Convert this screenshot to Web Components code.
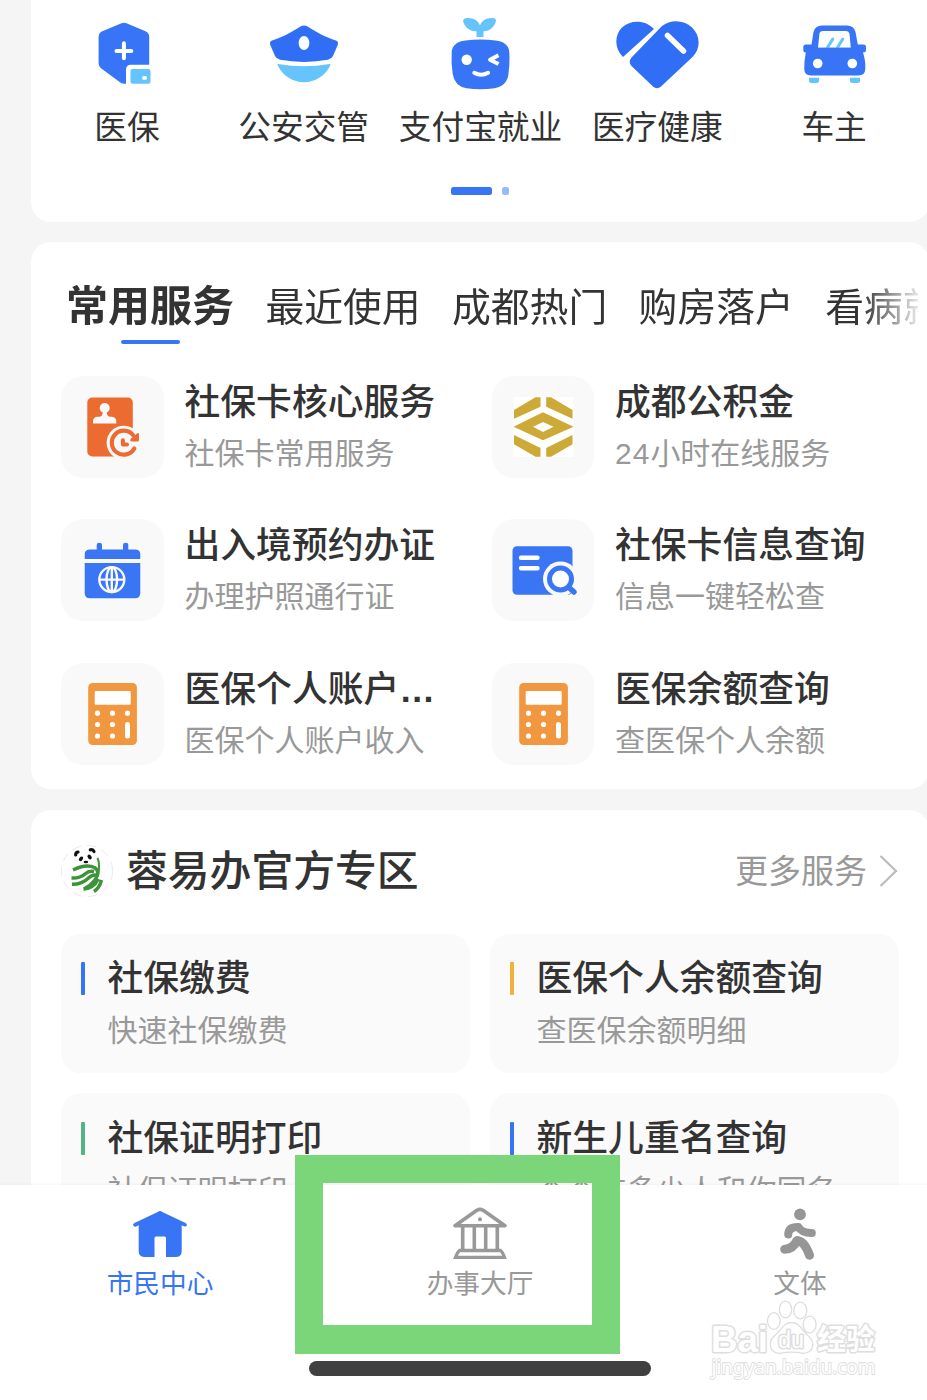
<!DOCTYPE html>
<html lang="zh-CN">
<head>
<meta charset="UTF-8">
<title>市民中心</title>
<style>
    body {
        margin: 0;
        background: #f5f5f5;
        color: #333;
        font-family: 'Liberation Sans', 'Noto Sans CJK SC', sans-serif;
        overflow: hidden;
    }
</style>
</head>
<body>
<citizen-app>
    <app-grid>
        <app-entry icon="shield">医保</app-entry>
        <app-entry icon="police">公安交管</app-entry>
        <app-entry icon="sprout">支付宝就业</app-entry>
        <app-entry icon="heart">医疗健康</app-entry>
        <app-entry icon="car">车主</app-entry>
    </app-grid>
    <service-panel>
        <span slot="tab">常用服务</span>
        <span slot="tab">最近使用</span>
        <span slot="tab">成都热门</span>
        <span slot="tab">购房落户</span>
        <span slot="tab">看病就医</span>
        <service-item icon="idcard">社保卡核心服务<span slot="sub">社保卡常用服务</span></service-item>
        <service-item icon="fund">成都公积金<span slot="sub"><span style="letter-spacing:1px">24</span>小时在线服务</span></service-item>
        <service-item icon="calendar">出入境预约办证<span slot="sub">办理护照通行证</span></service-item>
        <service-item icon="search">社保卡信息查询<span slot="sub">信息一键轻松查</span></service-item>
        <service-item icon="calc">医保个人账户<b>…</b><span slot="sub">医保个人账户收入</span></service-item>
        <service-item icon="calc">医保余额查询<span slot="sub">查医保个人余额</span></service-item>
    </service-panel>
    <zone-panel>
        <span slot="title">蓉易办官方专区</span>
        <span slot="more">更多服务</span>
        <zone-card color="#3875f6">社保缴费<span slot="sub">快速社保缴费</span></zone-card>
        <zone-card color="#efb23e">医保个人余额查询<span slot="sub">查医保余额明细</span></zone-card>
        <zone-card color="#54b483">社保证明打印<span slot="sub">社保证明打印</span></zone-card>
        <zone-card color="#3875f6">新生儿重名查询<span slot="sub">查查有多少人和你同名</span></zone-card>
    </zone-panel>
    <tab-bar slot="bar">
        <tab-item icon="home" active>市民中心</tab-item>
        <tab-item icon="hall">办事大厅</tab-item>
        <tab-item icon="runner">文体</tab-item>
    </tab-bar>
    <focus-frame slot="overlay"></focus-frame>
    <site-mark slot="overlay"></site-mark>
</citizen-app>

<script>
const icons = {
    shield: ['83 10 88 84', `
        <path fill="#3875f6" d="M121.5 23.3Q124 22.2 126.5 23.3L145.5 31.2Q149.2 33 149.2 37V64.7H131Q126 64.7 126 69.7V83.7H124Q121.8 83.7 120 82.3L102 69Q98.6 66.7 98.6 62.7V37Q98.6 33 102.3 31.2Z"/>
        <path stroke="#fff" stroke-width="4" stroke-linecap="round" d="M116.5 51H131.3M123.9 43.3V58.3"/>
        <rect x="130.5" y="69" width="20" height="14.8" rx="2" fill="#64c4fb"/>
        <rect x="142.2" y="76" width="4.7" height="3.7" rx="1.5" fill="#fff"/>`],
    police: ['260 10 88 84', `
        <path fill="#2f6ef5" d="M300.500 26.500Q304 24.500 307.500 26.500C316 32 326 37.500 336 40.500Q339 42 337.700 45L333 56Q331.500 59 328 59.800Q304 64 280 59.800Q276.500 59 275 56L270.300 45Q269 42 272 40.500C282 37.500 292 32 300.500 26.500Z"/>
        <ellipse cx="304" cy="43" rx="5.400" ry="7" fill="#fff"/>
        <path fill="#64c4fb" d="M278 64Q304 68.500 329.800 64Q331 64 330 66C325 76 315 82.200 304 82.200S283 76 278 66Q277 64 278 64Z"/>`],
    sprout: ['436.5 10 88 84', `
        <path fill="#64c4fb" d="M463.500 21Q464 18 468 18C475 18 479 21 480.500 25.500C482 21 486 18 493 18Q496.500 18 496.500 21C495 27 490 31.500 484 31.200V37H477V31.200C470 31.500 465 27 463.500 21Z"/>
        <path fill="#3875f6" d="M466 40.500Q481 38.500 496 40.500Q509 42 509.800 52Q510.500 62 509 74Q507.500 86 495 88.300Q481 90 467 88.300Q455 86 453.200 74Q451.500 62 452.200 52Q453 42 466 40.500Z"/>
        <circle cx="467.2" cy="59.700" r="5.2" fill="#fff"/>
        <path fill="none" stroke="#fff" stroke-width="4" stroke-linejoin="round" d="M499 55.300L490.500 59.700L499 64"/>
        <path fill="none" stroke="#fff" stroke-width="4" stroke-linecap="round" d="M474.800 72.800Q481.500 76.800 488.600 72.800"/>`],
    heart: ['613 10 88 84', `
        <path fill="#2f6ef5" d="M623 57C614 48 614.500 35 622 27.500C631 19 646 20 654 29Z"/>
        <path fill="#2f6ef5" d="M662 26C671 19 684 20 692 27.500C701 36 700.500 49 692.500 57L661 86.500Q657 90 653 86.500L631.500 66Q628 62 631.500 57.500Z"/>
        <path stroke="#fff" stroke-width="5.500" stroke-linecap="round" d="M667.500 35.500L683.500 51"/>`],
    car: ['790 10 88 84', `
        <path fill="#3875f6" d="M822 25.500H847Q854 25.500 855.500 32L857.800 44.500H863.500Q866 44.500 866 47V50Q866 52.500 863 52.500C865 58 865.500 64 865.300 69Q865 75.500 858.500 75.500H811Q804.400 75.500 804.200 69Q804 62 805.800 52.500Q803.300 52.500 803.300 50V47Q803.300 44.500 806 44.500H811.500L813.500 32Q815 25.500 822 25.500Z"/>
        <path fill="#fff" d="M823 31H845.500Q849 31 849.500 34L850.800 47.700H818L819.400 34Q819.800 31 823 31Z"/>
        <path stroke="#64c4fb" stroke-width="3" stroke-linecap="round" d="M827.500 47.500L832.800 39M837.500 47.500L842.800 39"/>
        <path fill="#3875f6" d="M815 47.700H854V52H815Z"/>
        <circle cx="817.700" cy="63.500" r="4.800" fill="#fff"/><circle cx="852.300" cy="63.500" r="4.800" fill="#fff"/>
        <path fill="#64c4fb" d="M809 77.800H819V80.500Q819 83 816.500 83H811.500Q809 83 809 80.500ZM850 77.800H860V80.500Q860 83 857.500 83H852.500Q850 83 850 80.500Z"/>`],
    idcard: ['61 376 103 102', `
        <rect x="87.300" y="397.500" width="45.500" height="59" rx="5" fill="#eb6b30"/>
        <circle cx="104.700" cy="408" r="5" fill="#f9f9f9"/>
        <path fill="#f9f9f9" d="M102.800 411H106.600Q106.500 416.500 110 416.700H112Q116.300 417.500 116.300 421V423.500H93V421Q93 417.500 97 416.700H99.500Q103 416.500 102.800 411Z"/>
        <circle cx="123.600" cy="442.700" r="17" fill="#f9f9f9"/>
        <path fill="none" stroke="#eb6b30" stroke-width="4.200" stroke-linecap="round" d="M133 435A12 12 0 1 0 134.300 448.500"/>
        <path fill="#eb6b30" d="M139 434V440Q139 441.500 137.500 441.500H132Q129 441 131 438.500L137 433.500Q139 432.500 139 434Z"/>
        <path fill="none" stroke="#eb6b30" stroke-width="4" stroke-linecap="round" stroke-linejoin="round" d="M122.900 440.300V444.500H127"/>`],
    fund: ['491.5 376 102 102', `
        <path fill="#fffffd" d="M513 397H573V457H513Z"/>
        <path fill="#cda938" d="M513.500 410L535 397.300H540V406.700L513.500 418.700ZM572 410L550.500 397.300H545.700V406.700L572 418.700ZM513.500 435L540 448V456.800H535L513.500 444.300ZM572 435L545.700 448V456.800H550.500L572 444.300Z"/>
        <path fill="#cda938" fill-rule="evenodd" d="M542.500 412.300L573 426.800L542.500 440.300L513 426.800ZM542.500 422L532.500 426.800L542.500 432L553 426.800Z"/>`],
    calendar: ['61 519 103 102', `
        <path fill="#3a76f4" d="M84.700 559V554.500Q84.700 549.500 90 549.500H96.700V545Q96.700 542.700 99.200 542.700Q102 542.700 102 545V549.500H123V545Q123 542.700 125.500 542.700Q128.300 542.700 128.300 545V549.500H135Q140.300 549.500 140.300 554.500V559ZM84.700 563H140.300V593Q140.300 598.300 135 598.300H90Q84.700 598.300 84.700 593Z"/>
        <g fill="none" stroke="#f9f9f9" stroke-width="2.400"><circle cx="111.800" cy="579.600" r="12.500"/><ellipse cx="111.800" cy="579.600" rx="5.300" ry="12.500"/><path d="M99.500 579.600H124M111.800 567V592"/></g>`],
    search: ['491.5 519 102 102', `
        <rect x="512" y="546.200" width="60" height="48.500" rx="4.500" fill="#3a76f4"/>
        <path stroke="#fff" stroke-width="4.400" stroke-linecap="round" d="M520.500 557.700H537M520.500 568.300H537"/>
        <circle cx="560" cy="579" r="17.500" fill="#f9f9f9"/>
        <circle cx="560" cy="579" r="11" fill="#fff" stroke="#3a76f4" stroke-width="5"/>
        <path stroke="#3a76f4" stroke-width="5.500" stroke-linecap="round" d="M568.500 587.500L573.500 592"/>`],
    calc: ['61 663 103 102', `
        <rect x="88.200" y="683" width="48.700" height="62" rx="4.500" fill="#f0973f"/>
        <rect x="94.700" y="691" width="36" height="13.700" rx="1" fill="#fff"/>
        <g fill="#fff"><circle cx="97.500" cy="713.200" r="2.600"/><circle cx="112.500" cy="713.200" r="2.600"/><circle cx="127.500" cy="713.200" r="2.600"/><circle cx="97.500" cy="724.500" r="2.600"/><circle cx="112.500" cy="724.500" r="2.600"/><circle cx="97.500" cy="736" r="2.600"/><circle cx="112.500" cy="736" r="2.600"/><rect x="125" y="722" width="5" height="16.500" rx="2.500"/></g>`],
    panda: ['61 845 52 52', `
        <circle cx="87" cy="871" r="25.600" fill="#fff" stroke="#e0e0e0" stroke-width=".7" stroke-dasharray="9 6"/>
        <path fill="none" stroke="#111" stroke-width="3.200" stroke-linecap="round" d="M75.700 855Q75.500 852.500 78 852M90.300 849.800Q93 849 94 851.500"/>
        <g fill="#111"><ellipse cx="81" cy="858.800" rx="1.800" ry="2.600" transform="rotate(40 81 858.800)"/><ellipse cx="89.600" cy="857" rx="1.800" ry="2.600" transform="rotate(-40 89.600 857)"/><ellipse cx="85.900" cy="862" rx="2.300" ry="1.300"/></g>
        <g fill="none" stroke="#3d9339" stroke-width="3.400"><path d="M73 870Q86 863.500 94.500 867.500Q101.500 872 94 881Q90 886 84 889"/><path d="M71.500 878Q80 878.500 85 874Q89 870.500 94 871.500"/><path d="M72 884.300Q82 884.500 88.500 878Q92 874.500 96 875"/><path stroke-width="2" d="M97.500 858Q100.500 865 98 874"/><path d="M83.500 889Q93 889 98.500 879M94 891.500Q99.500 888 101.500 880"/></g>`],
    arrow: ['876 852 22 38', `<path fill="none" stroke="#bbb" stroke-width="2.200" d="M879.500 856L895 871L879.500 886"/>`],
    home: ['116 1205 88 56', `
        <path fill="#3875f6" d="M157.700 1212Q160 1210.200 162.300 1212L185.500 1223Q187.300 1224 186.800 1225.300Q186.200 1227.200 184 1226.200L181.700 1225.200V1251Q181.700 1257 175.500 1257H166V1238Q166 1236.500 164.500 1236.500H156Q154.500 1236.500 154.500 1238V1257H145Q138.700 1257 138.700 1251V1225.200L136 1226.400Q134 1227.200 133.200 1225.300Q132.700 1224 134.500 1223Z"/>`],
    hall: ['436 1205 88 56', `
        <g fill="none" stroke="#999" stroke-width="3.600" stroke-linejoin="round"><path d="M476.500 1210.500Q480 1208.300 483.500 1210.500L505 1225.700H455ZM462.700 1226V1250M474.300 1226V1250M485.700 1226V1250M497.300 1226V1250"/><path stroke-width="3.300" stroke-linejoin="miter" d="M459.500 1250.500H500.500Q502.500 1252 504.500 1257.300H455.500Q457.500 1252 459.500 1250.500Z"/></g>
        <circle cx="480" cy="1219.300" r="2" fill="#999"/>`],
    runner: ['756 1205 88 56', `
        <circle cx="800" cy="1214.300" r="5.900" fill="#969696"/>
        <g fill="none" stroke="#969696" stroke-linecap="round" stroke-linejoin="round"><path stroke-width="8" d="M788.200 1234.500Q788.500 1226.700 798.500 1227Q801.500 1233 811.800 1233"/><path stroke-width="9" d="M784.700 1249.300Q793 1249 797 1240.500Q804.500 1241 809.500 1255.300"/></g>`]
};

class UiIcon extends HTMLElement {
    constructor() {
        super();
        this.attachShadow({ mode: 'open' });
    }

    connectedCallback() {
        const [box, body] = icons[this.getAttribute('name')];
        const [, , w, h] = box.split(' ');
        this.shadowRoot.innerHTML = `
            <style>
                :host { display: block; flex-shrink: 0; }
                svg { display: block; }
            </style>
            <svg viewBox="${box}" width="${w}" height="${h}">${body}</svg>
        `;
    }
}

class CitizenApp extends HTMLElement {
    constructor() {
        super();
        this.attachShadow({ mode: 'open' }).innerHTML = `
            <style>
                :host {
                    display: block;
                    position: relative;
                    height: 1400px;
                    overflow: hidden;
                }
                main {
                    display: flex;
                    flex-direction: column;
                    width: 898px;
                    padding-left: 31px;
                }
            </style>
            <main><slot></slot></main>
            <slot name="bar"></slot>
            <slot name="overlay"></slot>
        `;
    }
}

class AppGrid extends HTMLElement {
    constructor() {
        super();
        this.attachShadow({ mode: 'open' }).innerHTML = `
            <style>
                :host {
                    display: block;
                    box-sizing: border-box;
                    height: 222px;
                    margin-bottom: 20px;
                    padding: 10px 0 0 7.5px;
                    background: #fff;
                    border-radius: 0 0 20px 20px;
                }
                .row { display: grid; grid-template-columns: repeat(5, 176.8px); height: 177px; }
                .dots { display: flex; gap: 9.5px; padding-left: 412.5px; }
                i { width: 7.5px; height: 8px; border-radius: 2.5px; background: #98bafa; }
                i.on { width: 41px; background: #3875f6; }
            </style>
            <div class="row"><slot></slot></div>
            <div class="dots"><i class="on"></i><i></i></div>
        `;
    }
}

class AppEntry extends HTMLElement {
    constructor() {
        super();
        this.attachShadow({ mode: 'open' });
    }

    connectedCallback() {
        this.shadowRoot.innerHTML = `
            <style>
                :host { display: flex; flex-direction: column; align-items: center; }
                .label { margin-top: 10px; font-size: 32.7px; line-height: 48px; white-space: nowrap; }
            </style>
            <ui-icon name="${this.getAttribute('icon')}"></ui-icon>
            <div class="label"><slot></slot></div>
        `;
    }
}

class ServicePanel extends HTMLElement {
    constructor() {
        super();
        this.attachShadow({ mode: 'open' }).innerHTML = `
            <style>
                :host {
                    display: block;
                    box-sizing: border-box;
                    height: 547px;
                    margin-bottom: 21px;
                    padding: 34px 0 0 30px;
                    background: #fff;
                    border-radius: 20px;
                }
                nav {
                    display: flex;
                    gap: 31.4px;
                    width: 852px;
                    height: 64px;
                    padding-left: 5px;
                    overflow: hidden;
                    -webkit-mask-image: linear-gradient(to right, #000 800px, rgba(0,0,0,.12) 857px);
                    mask-image: linear-gradient(to right, #000 800px, rgba(0,0,0,.12) 857px);
                }
                ::slotted([slot=tab]) {
                    flex-shrink: 0;
                    font-size: 38.8px;
                    line-height: 63px;
                    white-space: nowrap;
                }
                ::slotted([slot=tab]:first-of-type) { font-size: 42px; line-height: 61px; font-weight: 700; }
                .line { width: 59px; height: 4px; margin: 0 0 32px 59.5px; border-radius: 2px; background: #3875f6; }
                .grid { display: grid; grid-template-columns: 430.5px 430px; grid-template-rows: 143px 144px 102px; }
            </style>
            <nav><slot name="tab"></slot></nav>
            <div class="line"></div>
            <div class="grid"><slot></slot></div>
        `;
    }
}

class ServiceItem extends HTMLElement {
    constructor() {
        super();
        this.attachShadow({ mode: 'open' });
    }

    connectedCallback() {
        this.shadowRoot.innerHTML = `
            <style>
                :host { display: flex; gap: 21px; }
                ui-icon { width: 102.5px; height: 102px; border-radius: 22px; background: #f9f9f9; overflow: hidden; }
                .title { padding-top: 1px; font-size: 35.8px; line-height: 52px; font-weight: 500; white-space: nowrap; }
                .sub { margin-top: -1px; font-size: 30px; line-height: 52px; color: #999; white-space: nowrap; }
            </style>
            <ui-icon name="${this.getAttribute('icon')}"></ui-icon>
            <div>
                <div class="title"><slot></slot></div>
                <div class="sub"><slot name="sub"></slot></div>
            </div>
        `;
    }
}

class ZonePanel extends HTMLElement {
    constructor() {
        super();
        this.attachShadow({ mode: 'open' }).innerHTML = `
            <style>
                :host {
                    display: block;
                    padding: 35px 30px 0;
                    background: #fff;
                    border-radius: 20px 20px 0 0;
                }
                header { display: flex; align-items: center; height: 52px; margin-bottom: 37px; }
                .title { flex: 1; margin-left: 13px; padding-top: 2px; font-size: 41.8px; line-height: 52px; font-weight: 500; }
                .more { margin-right: 10px; padding-top: 2px; font-size: 33px; line-height: 52px; color: #999; }
                .grid { display: grid; grid-template-columns: 409px 409px; grid-auto-rows: 139px; gap: 20px; }
                /* the second row of cards sits a little lower inside its box */
                ::slotted(zone-card:nth-of-type(n+3)) { --pad: 20px; }
            </style>
            <header>
                <ui-icon name="panda"></ui-icon>
                <div class="title"><slot name="title"></slot></div>
                <div class="more"><slot name="more"></slot></div>
                <ui-icon name="arrow"></ui-icon>
            </header>
            <div class="grid"><slot></slot></div>
        `;
    }
}

class ZoneCard extends HTMLElement {
    constructor() {
        super();
        this.attachShadow({ mode: 'open' });
    }

    connectedCallback() {
        this.shadowRoot.innerHTML = `
            <style>
                :host { display: flex; box-sizing: border-box; gap: 23px; padding: var(--pad, 19px) 0 0 19.5px; border-radius: 20px; background: #fafafa; }
                i { width: 4px; height: 33.5px; margin-top: 8.5px; border-radius: 1px; background: ${this.getAttribute('color')}; }
                .title { font-size: 35.8px; line-height: 52px; font-weight: 500; white-space: nowrap; }
                .sub { font-size: 30px; line-height: 51px; color: #999; white-space: nowrap; }
            </style>
            <i></i>
            <div>
                <div class="title"><slot></slot></div>
                <div class="sub"><slot name="sub"></slot></div>
            </div>
        `;
    }
}

class TabBar extends HTMLElement {
    constructor() {
        super();
        this.attachShadow({ mode: 'open' }).innerHTML = `
            <style>
                :host {
                    position: absolute;
                    left: 0;
                    bottom: 0;
                    width: 960px;
                    height: 215px;
                    background: #fff;
                    box-shadow: 0 -1px 3px rgba(0,0,0,.04);
                }
                .tabs { display: grid; grid-template-columns: repeat(3, 320px); height: 176px; }
                .pill { width: 342px; height: 15px; margin: 0 auto; border-radius: 8px; background: #404040; }
            </style>
            <div class="tabs"><slot></slot></div>
            <div class="pill"></div>
        `;
    }
}

class TabItem extends HTMLElement {
    constructor() {
        super();
        this.attachShadow({ mode: 'open' });
    }

    connectedCallback() {
        this.shadowRoot.innerHTML = `
            <style>
                :host { display: flex; flex-direction: column; align-items: center; padding-top: 20px; color: #999; }
                :host([active]) { color: #3875f6; }
                .label { margin-top: 3px; font-size: 26.7px; line-height: 40px; }
            </style>
            <ui-icon name="${this.getAttribute('icon')}"></ui-icon>
            <div class="label"><slot></slot></div>
        `;
    }
}

class FocusFrame extends HTMLElement {
    constructor() {
        super();
        this.attachShadow({ mode: 'open' }).innerHTML = `
            <style>
                :host {
                    position: absolute;
                    left: 295px;
                    top: 1155px;
                    width: 269px;
                    height: 142px;
                    border: 28px solid #7bd67a;
                    border-bottom-width: 29px;
                }
            </style>
        `;
    }
}

class SiteMark extends HTMLElement {
    constructor() {
        super();
        this.attachShadow({ mode: 'open' }).innerHTML = `
            <style>
                :host { position: absolute; left: 700px; top: 1295px; }
                svg { display: block; }
                text { paint-order: stroke; stroke-linejoin: round; }
            </style>
            <svg width="190" height="95" viewBox="700 1295 190 95" fill="#fff" stroke="#dedede" stroke-width="1.3">
                <g font-family="Liberation Sans" font-weight="700" stroke-width="3">
                    <text x="711" y="1352" font-size="37" textLength="57" lengthAdjust="spacingAndGlyphs">Bai</text>
                    <text x="817" y="1349.5" font-size="29" font-family="Noto Sans CJK SC">经验</text>
                </g>
                <ellipse cx="773.800" cy="1321" rx="6.300" ry="8.300"/>
                <ellipse cx="785.500" cy="1309.500" rx="6.200" ry="8.300"/>
                <ellipse cx="800.300" cy="1310.500" rx="6.500" ry="8.300"/>
                <ellipse cx="809.600" cy="1324.500" rx="6.500" ry="8.300"/>
                <path d="M792 1322.500C784 1322.500 782 1329 776.500 1334C766 1342 770 1353 780 1353.300Q791.500 1351 803 1353.300C814 1353 816 1342 807.500 1335C801 1329 799 1322.500 792 1322.500Z"/>
                <text x="778" y="1348.300" font-family="Liberation Sans" font-size="23" stroke-width="3" textLength="26" lengthAdjust="spacingAndGlyphs">du</text>
                <text x="711.500" y="1373.500" font-size="19.500" font-family="Noto Sans" stroke-width="1.800" textLength="164" lengthAdjust="spacingAndGlyphs">jingyan.baidu.com</text>
            </svg>
        `;
    }
}

customElements.define('ui-icon', UiIcon);
customElements.define('citizen-app', CitizenApp);
customElements.define('app-grid', AppGrid);
customElements.define('app-entry', AppEntry);
customElements.define('service-panel', ServicePanel);
customElements.define('service-item', ServiceItem);
customElements.define('zone-panel', ZonePanel);
customElements.define('zone-card', ZoneCard);
customElements.define('tab-bar', TabBar);
customElements.define('tab-item', TabItem);
customElements.define('focus-frame', FocusFrame);
customElements.define('site-mark', SiteMark);
</script>
</body>
</html>
